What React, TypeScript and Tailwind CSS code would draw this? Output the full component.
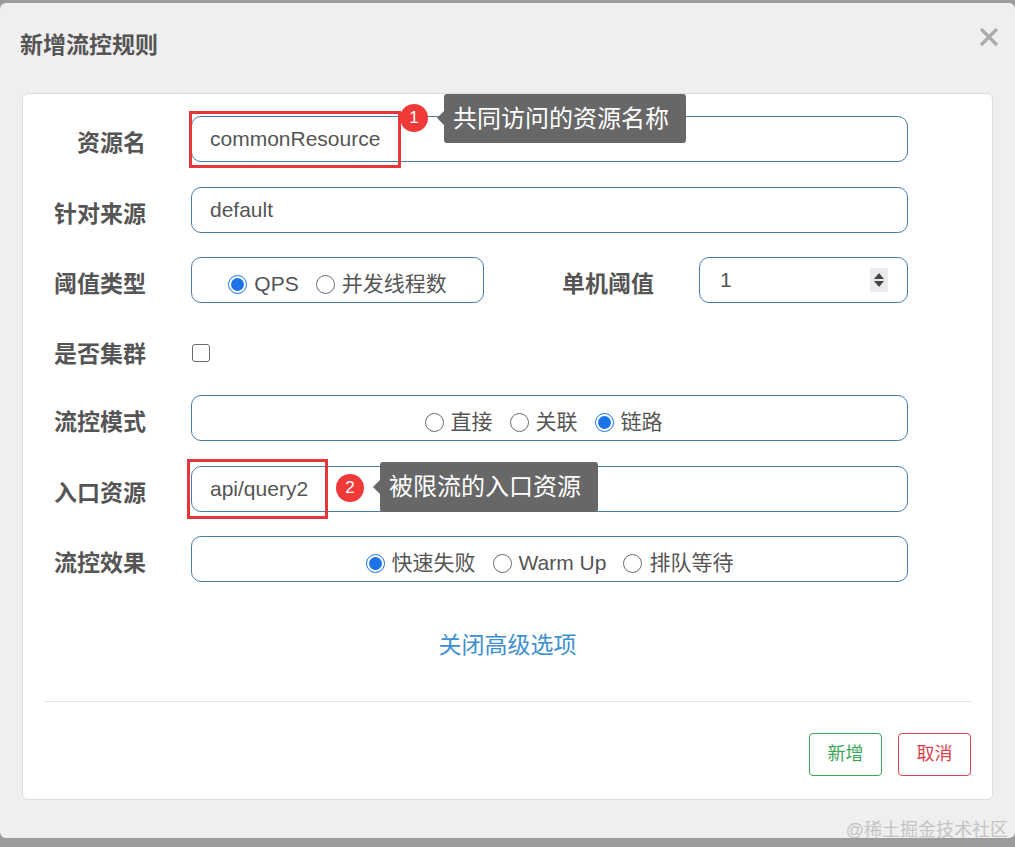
import React from "react";

const font = { fontFamily: '"Liberation Sans", "Noto Sans CJK SC", sans-serif' };

const Radio = ({ checked, label }: { checked?: boolean; label: string }) => (
  <span className="flex items-center gap-[7px]">
    {checked ? (
      <span className="flex h-[19px] w-[19px] items-center justify-center rounded-full border border-[#1a73e8] bg-white">
        <span className="h-[13px] w-[13px] rounded-full bg-[#1a73e8]" />
      </span>
    ) : (
      <span className="h-[19px] w-[19px] rounded-full border-[1.5px] border-[#6b6b6b] bg-white" />
    )}
    <span>{label}</span>
  </span>
);

const Label = ({ children, className = "mt-[8px]" }: { children: React.ReactNode; className?: string }) => (
  <div className={`w-[123px] shrink-0 text-right text-[23px] font-bold leading-none text-[#555] ${className}`}>
    {children}
  </div>
);

const boxCls =
  "h-[46px] rounded-[10px] border border-[#4a7bab] bg-white text-[21px] text-[#555]";

export default function App() {
  return (
    <div className="flex h-[847px] w-[1015px] flex-col bg-[#9b9b9b] pt-[3px] pb-[9px]" style={font}>
      <div className="relative flex flex-1 flex-col rounded-[6px] bg-[#efefef]">
        <div className="flex h-[90px] items-start justify-between px-[20px] pt-[29px]">
          <div className="text-[23px] font-bold leading-[26px] text-[#555]">新增流控规则</div>
          <svg width="18" height="18" viewBox="0 0 18 18" className="mt-[-4px] mr-[-3px]">
            <path d="M2 2 L16 16 M16 2 L2 16" stroke="#ababab" strokeWidth="3.2" strokeLinecap="round" />
          </svg>
        </div>

        <div className="relative mx-[22px] flex flex-col rounded-[6px] border border-[#dcdcdc] bg-white pb-[23px]">
          <div className="mt-[22px] flex items-center">
            <Label>资源名</Label>
            <div className={`ml-[45px] flex w-[717px] items-center pl-[18px] ${boxCls}`}>commonResource</div>
          </div>

          <div className="mt-[25px] flex items-center">
            <Label>针对来源</Label>
            <div className={`ml-[45px] flex w-[717px] items-center pl-[18px] ${boxCls}`}>default</div>
          </div>

          <div className="mt-[24px] flex items-center">
            <Label>阈值类型</Label>
            <div className={`ml-[45px] flex w-[293px] items-center justify-center gap-[17px] pt-[8px] ${boxCls}`}>
              <Radio checked label="QPS" />
              <Radio label="并发线程数" />
            </div>
            <div className="ml-[78px] mt-[8px] text-[23px] font-bold leading-none text-[#555]">单机阈值</div>
            <div className={`ml-[45px] flex w-[209px] items-center justify-between pl-[20px] pr-[19px] ${boxCls}`}>
              <span>1</span>
              <span className="flex h-[24px] w-[18px] flex-col items-center justify-center gap-[2px] bg-[#ececec]">
                <svg width="10" height="6" viewBox="0 0 10 6"><path d="M5 0 L10 6 L0 6 Z" fill="#444" /></svg>
                <svg width="10" height="6" viewBox="0 0 10 6"><path d="M0 0 L10 0 L5 6 Z" fill="#444" /></svg>
              </span>
            </div>
          </div>

          <div className="mt-[27px] flex h-[46px] items-center">
            <Label className="mt-[3px]">是否集群</Label>
            <div className="ml-[46px] h-[18px] w-[18px] rounded-[3px] border-[1.5px] border-[#6b6b6b] bg-white" />
          </div>

          <div className="mt-[19px] flex items-center">
            <Label>流控模式</Label>
            <div className={`ml-[45px] flex w-[717px] items-center justify-center gap-[17px] pr-[12px] pt-[8px] ${boxCls}`}>
              <Radio label="直接" />
              <Radio label="关联" />
              <Radio checked label="链路" />
            </div>
          </div>

          <div className="mt-[25px] flex items-center">
            <Label>入口资源</Label>
            <div className={`ml-[45px] flex w-[717px] items-center pl-[18px] ${boxCls}`}>api/query2</div>
          </div>

          <div className="mt-[24px] flex items-center">
            <Label>流控效果</Label>
            <div className={`ml-[45px] flex w-[717px] items-center justify-center gap-[17px] pt-[8px] ${boxCls}`}>
              <Radio checked label="快速失败" />
              <Radio label="Warm Up" />
              <Radio label="排队等待" />
            </div>
          </div>

          <div className="mt-[48px] text-center text-[23px] leading-[30px] text-[#3d8fd1]">关闭高级选项</div>

          <div className="mx-[21px] mt-[41px] border-t border-[#e2e2e2]" />

          <div className="mt-[31px] flex justify-end gap-[16px] pr-[21px]">
            <div className="flex h-[43px] w-[73px] items-center justify-center rounded-[4px] border border-[#3aa556] text-[18px] text-[#3aa556]">
              新增
            </div>
            <div className="flex h-[43px] w-[73px] items-center justify-center rounded-[4px] border border-[#d9434f] text-[18px] text-[#d9434f]">
              取消
            </div>
          </div>

          {/* annotations */}
          <div className="absolute left-[166px] top-[17px] h-[57px] w-[212px] border-[3px] border-[#e5373a]" />
          <div className="absolute left-[377px] top-[10px] flex h-[28px] w-[28px] items-center justify-center rounded-full bg-[#f03a3a] text-[17px] text-white">1</div>
          <div className="absolute left-[421px] top-0 flex h-[49px] w-[242px] items-center rounded-[3px] bg-[#676767] pl-[9px] text-[24px] text-white">
            <span className="absolute left-[-7px] top-[17px] h-0 w-0 border-y-[7px] border-r-[7px] border-y-transparent border-r-[#676767]" />
            共同访问的资源名称
          </div>

          <div className="absolute left-[164px] top-[365px] h-[60px] w-[141px] border-[3px] border-[#e5373a]" />
          <div className="absolute left-[313px] top-[380px] flex h-[28px] w-[28px] items-center justify-center rounded-full bg-[#f03a3a] text-[17px] text-white">2</div>
          <div className="absolute left-[357px] top-[368px] flex h-[50px] w-[218px] items-center rounded-[3px] bg-[#676767] pl-[9px] text-[24px] text-white">
            <span className="absolute left-[-7px] top-[18px] h-0 w-0 border-y-[7px] border-r-[7px] border-y-transparent border-r-[#676767]" />
            被限流的入口资源
          </div>
        </div>

        <div className="absolute bottom-[-3px] right-[7px] text-[18px] leading-[22px] text-[#c4c4c4]">@稀土掘金技术社区</div>
      </div>
    </div>
  );
}
